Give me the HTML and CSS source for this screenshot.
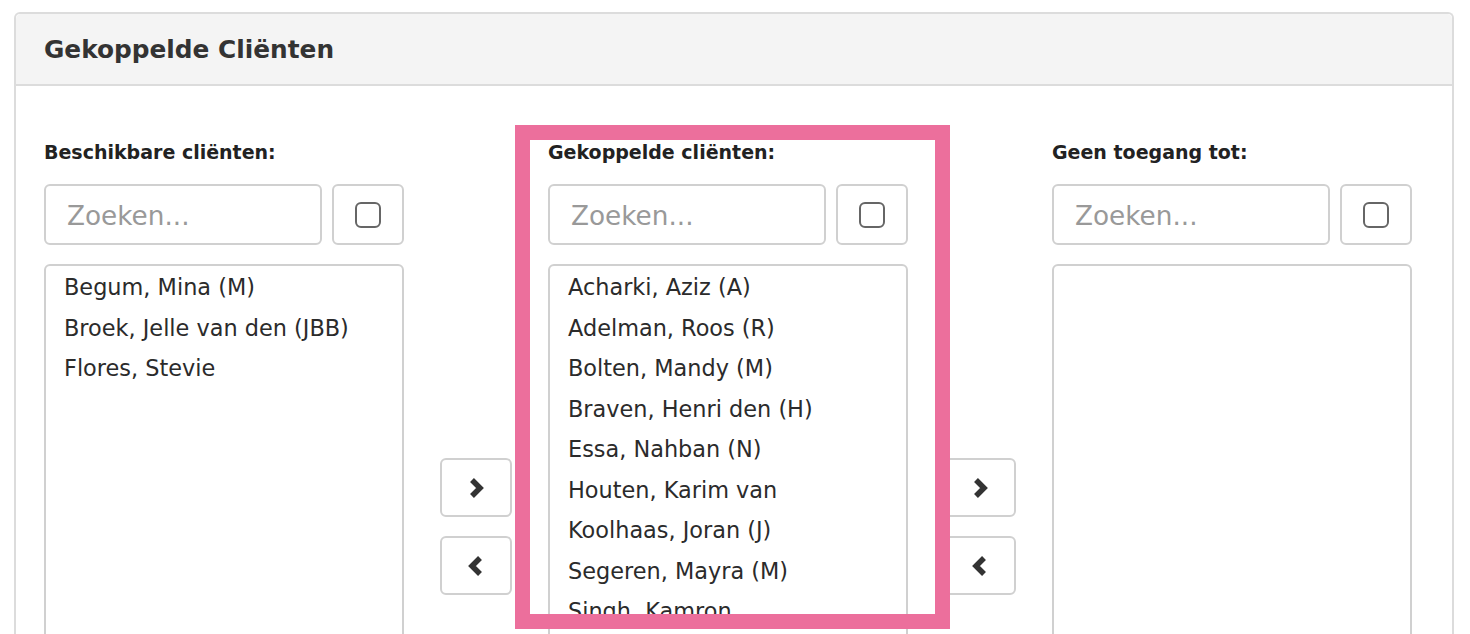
FILE: index.html
```html
<!DOCTYPE html>
<html lang="nl">
<head>
<meta charset="utf-8">
<title>Gekoppelde Cliënten</title>
<link rel="stylesheet" href="styles.css">
</head>
<body>
<div class="panel">
  <div class="panel-header">Gekoppelde Cliënten</div>
  <div class="panel-body">
    <div class="column">
      <div class="col-label">Beschikbare cliënten:</div>
      <div class="search-row">
        <input class="search" type="text" placeholder="Zoeken...">
        <button class="check-btn"><span class="check-box"></span></button>
      </div>
      <ul class="list">
        <li>Begum, Mina (M)</li>
        <li>Broek, Jelle van den (JBB)</li>
        <li>Flores, Stevie</li>
      </ul>
    </div>
    <div class="arrows">
      <button class="arrow-btn"><svg class="chev" width="22" height="26" viewBox="0 0 22 26"><polyline points="7,5 15,13 7,21" fill="none" stroke="#333" stroke-width="5.5" stroke-linejoin="miter"/></svg></button>
      <button class="arrow-btn"><svg class="chev" width="22" height="26" viewBox="0 0 22 26"><polyline points="15,5 7,13 15,21" fill="none" stroke="#333" stroke-width="5.5" stroke-linejoin="miter"/></svg></button>
    </div>
    <div class="column">
      <div class="col-label">Gekoppelde cliënten:</div>
      <div class="search-row">
        <input class="search" type="text" placeholder="Zoeken...">
        <button class="check-btn"><span class="check-box"></span></button>
      </div>
      <ul class="list">
        <li>Acharki, Aziz (A)</li>
        <li>Adelman, Roos (R)</li>
        <li>Bolten, Mandy (M)</li>
        <li>Braven, Henri den (H)</li>
        <li>Essa, Nahban (N)</li>
        <li>Houten, Karim van</li>
        <li>Koolhaas, Joran (J)</li>
        <li>Segeren, Mayra (M)</li>
        <li>Singh, Kamron</li>
        <li>Tahiri, Yasmina (Y)</li>
      </ul>
    </div>
    <div class="arrows">
      <button class="arrow-btn"><svg class="chev" width="22" height="26" viewBox="0 0 22 26"><polyline points="7,5 15,13 7,21" fill="none" stroke="#333" stroke-width="5.5" stroke-linejoin="miter"/></svg></button>
      <button class="arrow-btn"><svg class="chev" width="22" height="26" viewBox="0 0 22 26"><polyline points="15,5 7,13 15,21" fill="none" stroke="#333" stroke-width="5.5" stroke-linejoin="miter"/></svg></button>
    </div>
    <div class="column">
      <div class="col-label">Geen toegang tot:</div>
      <div class="search-row">
        <input class="search" type="text" placeholder="Zoeken...">
        <button class="check-btn"><span class="check-box"></span></button>
      </div>
      <ul class="list"></ul>
    </div>
  </div>
</div>
<div class="highlight"></div>
</body>
</html>
```
FILE: styles.css
```css
html, body {
  margin: 0;
  padding: 0;
  background: #fff;
  overflow: hidden;
}
body {
  font-family: "DejaVu Sans", Verdana, sans-serif;
  color: #333;
  position: relative;
  height: 634px;
}
.panel {
  margin: 12px 16px 0 14px;
  border: 2px solid #dcdcdc;
  border-bottom: none;
  border-radius: 6px 6px 0 0;
  height: 700px;
}
.panel-header {
  height: 70px;
  background: #f4f4f4;
  border-bottom: 2px solid #dcdcdc;
  border-radius: 5px 5px 0 0;
  display: flex;
  align-items: center;
  padding-left: 28px;
  font-size: 24.8px;
  font-weight: bold;
  color: #333;
}
.panel-body {
  display: flex;
  align-items: flex-start;
  gap: 36px;
  padding: 56px 0 0 28px;
}
.column {
  width: 360px;
  display: flex;
  flex-direction: column;
}
.col-label {
  font-size: 19px;
  line-height: 20px;
  font-weight: bold;
  color: #222;
  margin-bottom: 22px;
}
.search-row {
  display: flex;
  gap: 10px;
  height: 61px;
}
.search {
  width: 278px;
  box-sizing: border-box;
  height: 61px;
  border: 2px solid #d0d0d0;
  border-radius: 6px;
  padding: 3px 0 0 21px;
  margin: 0;
  font-family: "DejaVu Sans", Verdana, sans-serif;
  font-size: 26.3px;
  color: #333;
  outline: none;
}
.search::placeholder {
  color: #999;
}
.check-btn {
  width: 72px;
  height: 61px;
  box-sizing: border-box;
  border: 2px solid #d0d0d0;
  border-radius: 6px;
  background: #fff;
  margin: 0;
  padding: 0;
  display: flex;
  align-items: center;
  justify-content: center;
}
.check-box {
  width: 26px;
  height: 26px;
  box-sizing: border-box;
  border: 2.5px solid #666;
  border-radius: 6px;
}
.list {
  list-style: none;
  margin: 19px 0 0 0;
  padding: 1px 0 0 18px;
  height: 500px;
  border: 2px solid #d0d0d0;
  border-radius: 6px;
  font-size: 22.4px;
  color: #2b2b2b;
  overflow: hidden;
}
.list li {
  height: 40.5px;
  line-height: 40.5px;
  white-space: nowrap;
}
.arrows {
  width: 72px;
  display: flex;
  flex-direction: column;
  gap: 19px;
  padding-top: 316px;
}
.arrow-btn {
  width: 72px;
  height: 59px;
  box-sizing: border-box;
  border: 2px solid #d0d0d0;
  border-radius: 6px;
  background: #fff;
  margin: 0;
  padding: 0;
  display: flex;
  align-items: center;
  justify-content: center;
}
.chev {
  display: block;
  flex: none;
}
.highlight {
  position: absolute;
  left: 515px;
  top: 125px;
  width: 435px;
  height: 504px;
  box-sizing: border-box;
  border: 15px solid #ec6f9c;
  pointer-events: none;
}
```
